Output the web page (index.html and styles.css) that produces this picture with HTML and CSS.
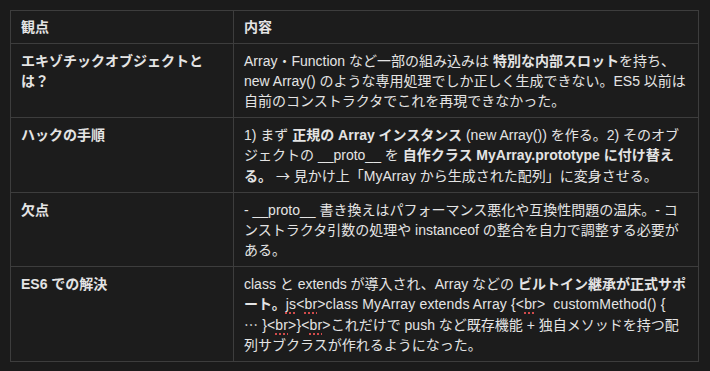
FILE: index.html
```html
<!DOCTYPE html>
<html lang="ja">
<head>
<meta charset="utf-8">
<title>エキゾチックオブジェクト</title>
<link rel="stylesheet" href="styles.css">
</head>
<body>
<table class="info-table">
  <thead>
    <tr>
      <th class="col-key">観点</th>
      <th class="col-val">内容</th>
    </tr>
  </thead>
  <tbody>
    <tr>
      <td class="key">エキゾチックオブジェクトとは？</td>
      <td>Array・Function など一部の組み込みは <strong>特別な内部スロット</strong>を持ち、new Array() のような専用処理でしか正しく生成できない。ES5 以前は自前のコンストラクタでこれを再現できなかった。</td>
    </tr>
    <tr>
      <td class="key">ハックの手順</td>
      <td>1) まず <strong>正規の Array インスタンス</strong> (new Array()) を作る。2) そのオブジェクトの __proto__ を <strong>自作クラス MyArray.prototype に付け替える。</strong> <span class="cjk">→</span> 見かけ上「MyArray から生成された配列」に変身させる。</td>
    </tr>
    <tr>
      <td class="key">欠点</td>
      <td>- __proto__ 書き換えはパフォーマンス悪化や互換性問題の温床。- コンストラクタ引数の処理や instanceof の整合を自力で調整する必要がある。</td>
    </tr>
    <tr>
      <td class="key">ES6 での解決</td>
      <td>class と extends が導入され、Array などの <strong>ビルトイン継承が正式サポート。</strong><span class="snippet"><span class="typo">js</span>&lt;<span class="typo">br</span>&gt;class MyArray extends Array {&lt;<span class="typo">br</span>&gt;&nbsp; customMethod() { <span class="nowrap"><span class="cjk">…</span>&nbsp;}</span>&lt;<span class="typo">br</span>&gt;}&lt;<span class="typo">br</span>&gt;</span>これだけで push など既存機能 + 独自メソッドを持つ配列サブクラスが作れるようになった。</td>
    </tr>
  </tbody>
</table>
</body>
</html>
```

FILE: styles.css
```css
html, body {
  margin: 0;
  padding: 0;
  background: #1b1b1b;
}

body {
  padding: 10px 11px 0 10px;
  font-family: "Liberation Sans", "Noto Sans CJK JP", sans-serif;
  font-size: 14px;
  line-height: 20px;
  color: #e4e4e4;
}

.info-table {
  width: 689px;
  border-collapse: collapse;
  background: #1c1c1c;
}

.info-table th,
.info-table td {
  border: 1px solid #3d3d3d;
  padding: 7px 10px 6px 10px;
  text-align: left;
  vertical-align: top;
}

.info-table th {
  font-weight: 700;
  padding-top: 6px;
  padding-bottom: 6px;
}

.col-key {
  width: 202px;
}

.key {
  font-weight: 700;
}

strong {
  font-weight: 700;
}

.cjk {
  font-family: "Noto Sans CJK JP", sans-serif;
}

.nowrap {
  white-space: nowrap;
}

.snippet {
  letter-spacing: 0.15px;
}

.typo {
  text-decoration: underline dotted #d14b4b;
  text-decoration-thickness: 2px;
  text-underline-offset: 3px;
}
```
